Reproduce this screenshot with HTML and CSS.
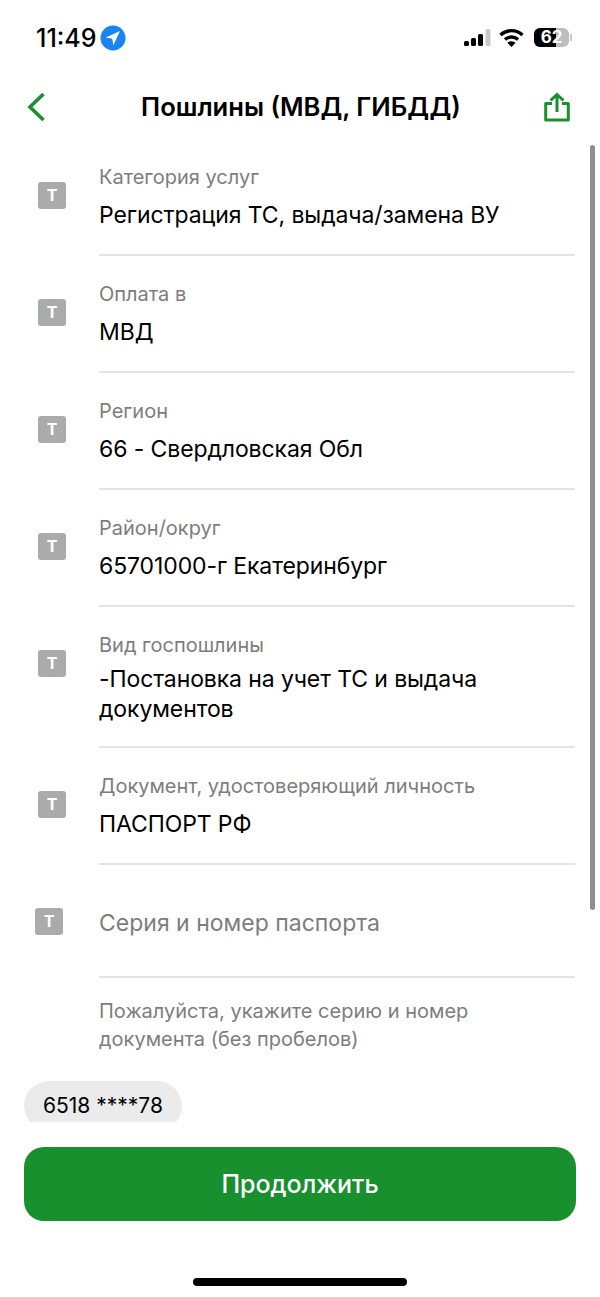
FILE: index.html
```html
<!DOCTYPE html>
<html lang="ru">
<head>
    <meta charset="UTF-8">
    <meta name="viewport" content="width=device-width, initial-scale=1.0">
    <title>Пошлины (МВД, ГИБДД)</title>
    <link rel="stylesheet" href="styles.css">
</head>
<body>

<div class="screen">
    <!-- Статус-бар -->
    <div class="status-bar">
        <div class="status-left">
            <span class="time">11:49</span>
            <svg class="location" width="26" height="26" viewBox="0 0 26 26">
                <circle cx="13" cy="13" r="12.5" fill="#1a84f0"/>
                <path d="M20 6 L5.8 12.6 L12.2 13.8 L13.4 20.2 Z" fill="#fff"/>
            </svg>
        </div>
        <div class="status-right">
            <svg class="signal" width="27" height="18" viewBox="0 0 27 18">
                <rect x="0" y="12" width="5" height="5" rx="1.5" fill="#000"/>
                <rect x="7" y="9" width="5" height="8" rx="1.5" fill="#000"/>
                <rect x="14" y="5" width="5" height="12" rx="1.5" fill="#000"/>
                <rect x="21.5" y="0" width="5" height="17" rx="1.5" fill="#c9c9c9"/>
            </svg>
            <svg class="wifi" width="25" height="19" viewBox="0 0 25 19">
                <path d="M1.5 7 A16 16 0 0 1 23.5 7" fill="none" stroke="#000" stroke-width="3.4"/>
                <path d="M6 11.6 A9.5 9.5 0 0 1 19 11.6" fill="none" stroke="#000" stroke-width="3.4"/>
                <path d="M12.5 19 L8.4 14.8 A6 6 0 0 1 16.6 14.8 Z" fill="#000"/>
            </svg>
            <div class="battery">
                <div class="battery-level"></div>
                <span class="battery-text">62</span>
            </div>
            <div class="battery-cap"></div>
        </div>
    </div>

    <!-- Заголовок -->
    <div class="header">
        <svg width="20" height="30" viewBox="0 0 20 30">
            <path d="M17.5 2 L4 15 L17.5 28" fill="none" stroke="#1a8f2e" stroke-width="3.6"/>
        </svg>
        <h1>Пошлины (МВД, ГИБДД)</h1>
        <svg width="26" height="30" viewBox="0 0 26 30">
            <path d="M8 11.5 H1.7 V28 H24.3 V11.5 H18" fill="none" stroke="#1a8f2e" stroke-width="3" stroke-linejoin="round"/>
            <path d="M13 20 V2.5 M6.5 8.5 L13 2.5 L19.5 8.5" fill="none" stroke="#1a8f2e" stroke-width="3"/>
        </svg>
    </div>

    <!-- Форма -->
    <div class="content">
        <div class="scrollbar"></div>

        <div class="row">
            <div class="t-icon">Т</div>
            <div class="field">
                <div class="label">Категория услуг</div>
                <div class="value">Регистрация ТС, выдача/замена ВУ</div>
            </div>
        </div>
        <div class="row">
            <div class="t-icon">Т</div>
            <div class="field">
                <div class="label">Оплата в</div>
                <div class="value">МВД</div>
            </div>
        </div>
        <div class="row">
            <div class="t-icon">Т</div>
            <div class="field">
                <div class="label">Регион</div>
                <div class="value">66 - Свердловская Обл</div>
            </div>
        </div>
        <div class="row">
            <div class="t-icon">Т</div>
            <div class="field">
                <div class="label">Район/округ</div>
                <div class="value">65701000-г Екатеринбург</div>
            </div>
        </div>
        <div class="row">
            <div class="t-icon">Т</div>
            <div class="field">
                <div class="label">Вид госпошлины</div>
                <div class="value value-long">-Постановка на учет ТС и выдача документов</div>
            </div>
        </div>
        <div class="row">
            <div class="t-icon">Т</div>
            <div class="field">
                <div class="label">Документ, удостоверяющий личность</div>
                <div class="value">ПАСПОРТ РФ</div>
            </div>
        </div>
        <div class="row row-input">
            <div class="t-icon">Т</div>
            <div class="field">
                <div class="placeholder">Серия и номер паспорта</div>
            </div>
        </div>

        <div class="hint">Пожалуйста, укажите серию и номер документа (без пробелов)</div>
        <div class="chips">
            <div class="chip">6518 ****78</div>
        </div>
    </div>

    <!-- Кнопка -->
    <div class="footer">
        <button class="btn">Продолжить</button>
        <div class="home-bar"></div>
    </div>
</div>

</body>
</html>
```

FILE: styles.css
```css
body {
    margin: 0;
    padding: 0;
    background-color: #fff;
    font-family: Inter, "Noto Sans", sans-serif;
    color: #000;
}
.screen {
    width: 600px;
    height: 1297px;
    display: flex;
    flex-direction: column;
    overflow: hidden;
}
.status-bar {
    height: 75px;
    padding: 0 28px 0 36px;
    display: flex;
    justify-content: space-between;
    align-items: center;
    box-sizing: border-box;
}
.status-left {
    display: flex;
    align-items: center;
    gap: 3px;
}
.time {
    font-size: 25px;
    font-weight: 500;
}
.status-right {
    display: flex;
    align-items: center;
    gap: 10px;
}
.signal {
    margin-right: -2px;
}
.battery {
    position: relative;
    width: 35px;
    height: 19px;
    border-radius: 6px;
    background-color: #bdbdbd;
    overflow: hidden;
    text-align: center;
}
.battery-level {
    width: 22px;
    height: 19px;
    background-color: #000;
}
.battery-text {
    position: absolute;
    top: 0;
    left: 0;
    width: 35px;
    font-size: 17px;
    line-height: 19px;
    font-weight: 700;
    color: #fff;
}
.battery-cap {
    width: 2px;
    height: 7px;
    margin-left: -9px;
    background-color: #c9c9c9;
}
.header {
    height: 63px;
    padding: 0 30px 0 26px;
    display: flex;
    justify-content: space-between;
    align-items: center;
}
.header h1 {
    margin: 0 0 0 12px;
    font-size: 25.6px;
    font-weight: 600;
}
.content {
    position: relative;
    flex: none;
    height: 984px;
    padding-top: 1px;
    box-sizing: border-box;
    overflow: hidden;
}
.scrollbar {
    position: absolute;
    top: 7px;
    left: 590px;
    width: 5px;
    height: 765px;
    border-radius: 3px;
    background-color: #8f8f8f;
}
.row {
    display: flex;
    align-items: flex-start;
    padding-left: 38px;
}
.t-icon {
    flex: none;
    width: 28px;
    height: 27px;
    margin-top: 43px;
    border-radius: 3px;
    background-color: #ababab;
    color: #fff;
    font-size: 16px;
    font-weight: 700;
    line-height: 27px;
    text-align: center;
}
.field {
    width: 476px;
    margin: 0 25px 0 33px;
    padding-top: 25px;
    border-bottom: 2px solid #e4e4e4;
}
.label {
    font-size: 20px;
    line-height: 26px;
    color: #7d7d7d;
}
.value {
    margin-top: 10px;
    padding-bottom: 24px;
    font-size: 23px;
    line-height: 30px;
    letter-spacing: -0.1px;
}
.value-long {
    margin-top: 6px;
    padding-bottom: 22px;
}
.row-input {
    padding-left: 35px;
}
.row-input .t-icon {
    margin-top: 43px;
}
.row-input .field {
    margin-left: 36px;
    padding-top: 43px;
    height: 68px;
}
.placeholder {
    font-size: 23px;
    line-height: 30px;
    color: #7d7d7d;
}
.hint {
    margin: 19px 25px 0 99px;
    width: 400px;
    font-size: 20px;
    line-height: 28px;
    color: #7d7d7d;
}
.chips {
    margin-top: 28px;
    padding-left: 24px;
}
.chip {
    display: inline-block;
    padding: 0 19px;
    height: 50px;
    line-height: 50px;
    border-radius: 25px;
    background-color: #ebebeb;
    font-size: 21px;
}
.footer {
    flex: none;
    height: 175px;
    padding: 25px 24px 0;
    box-sizing: border-box;
    background-color: #fff;
}
.btn {
    display: block;
    width: 100%;
    height: 74px;
    border: none;
    border-radius: 20px;
    background-color: #19902e;
    color: #fff;
    font-family: inherit;
    font-size: 25px;
    font-weight: 500;
}
.home-bar {
    width: 214px;
    height: 8px;
    margin: 57px auto 0;
    border-radius: 4px;
    background-color: #000;
}
```
